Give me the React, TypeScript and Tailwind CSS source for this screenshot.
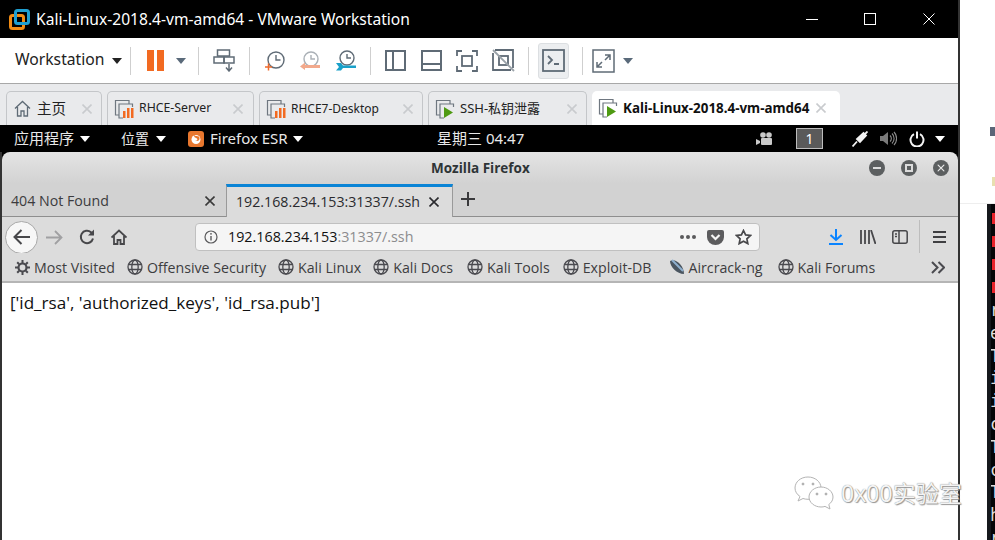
import type { ReactNode } from "react";

const ui = "font-['Noto_Sans','Noto_Sans_CJK_SC',sans-serif]";

function Caret({ className = "" }: { className?: string }) {
  return (
    <svg width="10" height="6" viewBox="0 0 10 6" className={className}>
      <path d="M0 0h10L5 6z" fill="currentColor" />
    </svg>
  );
}

function Sep({ className = "" }: { className?: string }) {
  return <div className={`h-[28px] w-px bg-[#cfcfcf] ${className}`} />;
}

function Globe() {
  return (
    <svg width="16" height="16" viewBox="0 0 16 16" fill="none" stroke="#4a4a4f" strokeWidth="1.3" className="flex-none">
      <circle cx="8" cy="8" r="7" />
      <ellipse cx="8" cy="8" rx="3.2" ry="7" />
      <path d="M1.5 5.5h13M1.5 10.5h13" />
    </svg>
  );
}

function VmIcon({ running }: { running?: boolean }) {
  return (
    <svg width="20" height="20" viewBox="0 0 20 20" fill="none" className="flex-none">
      <path d="M5 16H1.5V1.5H15V5" stroke="#6f7780" strokeWidth="1.2" />
      <path d="M9 19H5V5h13.500V8" stroke="#6f7780" strokeWidth="1.2" />
      {running ? (
        <path d="M9 8l9 5.500-9 5.500z" fill="#4e9a12" />
      ) : (
        <>
          <rect x="9" y="12" width="2.500" height="7" fill="#f26a21" />
          <rect x="13" y="9" width="2.500" height="10" fill="#f26a21" />
          <rect x="17" y="9" width="2.500" height="10" fill="#f26a21" />
        </>
      )}
    </svg>
  );
}

function CloseX({ className = "" }: { className?: string }) {
  return (
    <svg width="10" height="10" viewBox="0 0 10 10" className={className}>
      <path d="M0.500 0.500l9 9M9.500 0.500l-9 9" stroke="currentColor" strokeWidth="1.600" />
    </svg>
  );
}

function VmTab({ width, children, textClass, closeClass, icon }: { width: string; children: ReactNode; textClass: string; closeClass: string; icon: ReactNode }) {
  return (
    <div className={`flex h-[34px] flex-none items-center rounded-t-[5px] border border-b-0 border-[#c4c6c9] pl-[6px] ${width}`}>
      {icon}
      <span className={`whitespace-nowrap text-[#222] ${textClass}`}>{children}</span>
      <CloseX className={`ml-auto text-[#c9cbce] ${closeClass}`} />
    </div>
  );
}

function Bookmark({ icon, label, className = "" }: { icon?: ReactNode; label: string; className?: string }) {
  return (
    <div className={`flex flex-none items-center gap-[4px] ${className}`}>
      {icon ?? <Globe />}
      <span className="whitespace-nowrap text-[14.200px] text-[#3d3d3f]">{label}</span>
    </div>
  );
}

function TitleBar() {
  return (
    <div className="flex h-[38px] flex-none items-center bg-black pl-[9px]">
      <svg width="21" height="21" viewBox="0 0 21 21" fill="none" className="flex-none">
        <rect x="1.500" y="6.500" width="13" height="13" rx="2" stroke="#f28c13" strokeWidth="3" />
        <rect x="6.500" y="1.500" width="13" height="13" rx="2" stroke="#1f9fd0" strokeWidth="3" />
      </svg>
      <span className={`ml-[6px] w-[375px] whitespace-nowrap pt-px text-[15.600px] text-white ${ui}`}>Kali-Linux-2018.4-vm-amd64 - VMware Workstation</span>
      <div className="ml-[395px] h-px w-[12px] bg-white" />
      <div className="ml-[46px] h-[12px] w-[12px] border border-white" />
      <svg width="12" height="12" viewBox="0 0 12 12" className="ml-[47px]">
        <path d="M0.500 0.500l11 11M11.500 0.500l-11 11" stroke="#fff" strokeWidth="1" />
      </svg>
    </div>
  );
}

function Toolbar() {
  const g = "#5f6b76";
  return (
    <div className="flex h-[45px] flex-none items-center bg-white pl-[15px]">
      <span className={`w-[89px] whitespace-nowrap pb-[2px] text-[15.700px] text-[#222] ${ui}`}>Workstation</span>
      <Caret className="ml-[8px] text-[#222]" />
      <Sep className="ml-[8px]" />
      <div className="ml-[16px] flex gap-[3px]">
        <div className="h-[21px] w-[7px] bg-[#f26a21]" />
        <div className="h-[21px] w-[7px] bg-[#f26a21]" />
      </div>
      <Caret className="ml-[12px] text-[#5a6a7a]" />
      <Sep className="ml-[12px]" />
      <svg width="22" height="23" viewBox="0 0 22 23" fill="none" stroke={g} strokeWidth="1.500" className="ml-[14px]">
        <rect x="4.500" y="1" width="12" height="6" />
        <rect x="1" y="8" width="10" height="6" />
        <rect x="11" y="8" width="10" height="6" />
        <path d="M16 15v6M13 18.500l3 3.500 3-3.500" />
      </svg>
      <Sep className="ml-[14px]" />
      <svg width="20" height="20" viewBox="0 0 20 20" fill="none" className="ml-[15px]">
        <circle cx="11" cy="9" r="8" stroke={g} strokeWidth="1.400" />
        <path d="M11 4v5h4.500" stroke={g} strokeWidth="1.400" />
        <path d="M0 16h7M3.500 12.500v7" stroke="#ee6a2c" strokeWidth="1.500" />
      </svg>
      <svg width="21" height="20" viewBox="0 0 21 20" fill="none" className="ml-[15px]">
        <circle cx="11" cy="8" r="7" stroke="#aab0b6" strokeWidth="1.400" />
        <path d="M11 4v4h4" stroke="#aab0b6" strokeWidth="1.400" />
        <path d="M0 15.500l5-4v2.500h15v3H5V19z" fill="#f2a98c" />
      </svg>
      <svg width="21" height="21" viewBox="0 0 21 21" fill="none" className="ml-[15px]">
        <circle cx="11" cy="8" r="7" stroke={g} strokeWidth="1.400" />
        <path d="M11 4v4h4" stroke={g} strokeWidth="1.400" />
        <path d="M0 13h5l2 2.500h13v2.500H7l-2 2.500H0l3-3.500z" fill="#19a0c9" />
      </svg>
      <Sep className="ml-[13px]" />
      <svg width="21" height="21" viewBox="0 0 21 21" fill="none" stroke={g} strokeWidth="2" className="ml-[14px]">
        <rect x="1" y="1" width="19" height="19" />
        <path d="M8 1v19" />
      </svg>
      <svg width="21" height="21" viewBox="0 0 21 21" fill="none" stroke={g} strokeWidth="2" className="ml-[15px]">
        <rect x="1" y="1" width="19" height="19" />
        <path d="M1 14h19" />
      </svg>
      <svg width="22" height="22" viewBox="0 0 22 22" fill="none" stroke={g} strokeWidth="1.800" className="ml-[14px]">
        <rect x="6" y="6" width="10" height="10" />
        <path d="M1 6V1h5M16 1h5v5M21 16v5h-5M6 21H1v-5" />
      </svg>
      <svg width="23" height="23" viewBox="0 0 23 23" fill="none" stroke={g} strokeWidth="1.800" className="ml-[14px]">
        <path d="M3 1h18v18M19 21H1V4" />
        <rect x="7" y="7" width="9" height="9" />
        <path d="M1 1l21 21" stroke="#9aa2a9" />
      </svg>
      <Sep className="ml-[13px]" />
      <div className="ml-[9px] flex h-[36px] w-[31px] flex-none items-center justify-center rounded-[3px] border border-[#dcdfe2] bg-[#eceef0]">
        <svg width="23" height="23" viewBox="0 0 23 23" fill="none" stroke="#5f6b76" strokeWidth="1.800">
          <rect x="1" y="1" width="21" height="21" />
          <path d="M6 7l4 4-4 4M12 15h5" />
        </svg>
      </div>
      <Sep className="ml-[13px]" />
      <svg width="23" height="24" viewBox="0 0 23 24" fill="none" stroke={g} strokeWidth="1.500" className="ml-[9px]">
        <rect x="1" y="1" width="21" height="22" />
        <path d="M13 6h5v5M18 6l-5 5M10 18H5v-5M5 18l5-5" />
      </svg>
      <Caret className="ml-[8px] text-[#5a6a7a]" />
    </div>
  );
}

function VmTabs() {
  return (
    <div className={`flex h-[42px] flex-none items-end gap-[5px] border-t border-[#a8a8a8] bg-[#e9eaec] pl-[6px] ${ui}`}>
      <div className="flex h-[34px] w-[96px] flex-none items-center rounded-t-[5px] border border-b-0 border-[#c4c6c9] pl-[7px]">
        <svg width="17" height="17" viewBox="0 0 17 17" fill="none" stroke="#5f6b76" strokeWidth="1.300" className="flex-none">
          <path d="M1 8.500L8.500 1.500 16 8.500M3.500 7v9h3.500v-5h3v5h3.500V7" />
        </svg>
        <span className="ml-[6px] text-[14.500px] text-[#222]">主页</span>
        <CloseX className="ml-auto mr-[9px] text-[#c9cbce]" />
      </div>
      <VmTab width="w-[147px]" icon={<VmIcon />} textClass="ml-[5px] text-[12.300px]" closeClass="mr-[10px]">RHCE-Server</VmTab>
      <VmTab width="w-[164px]" icon={<VmIcon />} textClass="ml-[5px] text-[12px]" closeClass="mr-[9px]">RHCE7-Desktop</VmTab>
      <VmTab width="w-[159px]" icon={<VmIcon running />} textClass="ml-[5px] text-[13px]" closeClass="mr-[9px]">SSH-私钥泄露</VmTab>
      <div className="flex h-[34px] w-[248px] flex-none items-center rounded-t-[5px] bg-white pl-[6px]">
        <VmIcon running />
        <span className="ml-[5px] whitespace-nowrap text-[13.400px] font-bold text-[#111]">Kali-Linux-2018.4-vm-amd64</span>
        <CloseX className="ml-auto mr-[14px] text-[#c9cbce]" />
      </div>
    </div>
  );
}

function GnomeBar() {
  return (
    <div className={`relative flex h-[27px] flex-none items-center bg-black pl-[14px] text-[15px] text-[#e8e8e8] ${ui}`}>
      <span className="w-[60px] whitespace-nowrap">应用程序</span>
      <Caret className="ml-[6px] text-white" />
      <span className="ml-[31px] w-[28px] whitespace-nowrap text-[14px]">位置</span>
      <Caret className="ml-[7px] text-white" />
      <svg width="16" height="16" viewBox="0 0 16 16" className="ml-[22px] flex-none">
        <rect width="16" height="16" rx="3" fill="#e8772e" />
        <circle cx="8" cy="8.500" r="4.500" fill="#fff" />
        <path d="M6 4c2 2 5 0 5.500 3S9 10.500 7 9.500c2 .5 3-1 2-2S6 7 6 4z" fill="#e8772e" />
      </svg>
      <span className="ml-[6px] w-[78px] whitespace-nowrap">Firefox ESR</span>
      <Caret className="ml-[5px] text-white" />
      <span className="ml-[134px] w-[89px] whitespace-nowrap">星期三 04:47</span>
      <svg width="16" height="13" viewBox="0 0 16 13" className="ml-[230px] flex-none" fill="#c9c9c9">
        <circle cx="7" cy="3" r="2.800" />
        <circle cx="13" cy="3" r="2.800" />
        <rect x="5" y="6" width="11" height="7" rx="1" />
        <path d="M0 7l4 2v2l-4 2z" />
      </svg>
      <div className="ml-[24px] flex h-[21px] w-[27px] flex-none items-center justify-center border border-[#bdbdbd] bg-[#5a5a5a] text-[14px] text-white">1</div>
      <svg width="16" height="16" viewBox="0 0 16 16" className="ml-[29px] flex-none">
        <path d="M0.500 15.500L5 10.500M5 8l3 3 6-6.500-2.500-2.500zM12.500 3.500L15.500 0.500" stroke="#f2f2f2" strokeWidth="1.800" fill="#f2f2f2" />
      </svg>
      <svg width="17" height="15" viewBox="0 0 17 15" fill="none" className="ml-[12px] flex-none">
        <path d="M0 5h3l5-4v13l-5-4H0z" fill="#7a7a7a" />
        <path d="M10 4.500a4 4 0 010 6M12 2.500a7 7 0 010 10M14 1a9.500 9.500 0 010 13" stroke="#8c8c8c" strokeWidth="1.100" />
      </svg>
      <svg width="16" height="16" viewBox="0 0 16 16" fill="none" stroke="#f4f4f4" strokeWidth="2" className="ml-[12px] flex-none">
        <path d="M5 3.200a6.500 6.500 0 106 0M8 0.500v7" />
      </svg>
      <Caret className="ml-[10px] text-white" />
    </div>
  );
}

function FirefoxTitle() {
  const btn = "flex h-[16px] w-[16px] flex-none items-center justify-center rounded-full bg-[#5c5f60]";
  return (
    <div className="relative flex h-[32px] flex-none items-center justify-end gap-[16px] rounded-t-[8px] bg-gradient-to-b from-[#e4e4e4] to-[#d2d2d2] pr-[9px]">
      <span className="absolute left-[429px] top-[6px] whitespace-nowrap text-[13.500px] font-bold text-[#2e3436]">Mozilla Firefox</span>
      <div className={btn}>
        <div className="h-[2px] w-[8px] bg-[#dcdcdc]" />
      </div>
      <div className={btn}>
        <div className="h-[8px] w-[8px] border-2 border-[#dcdcdc]" />
      </div>
      <div className={btn}>
        <CloseX className="scale-75 text-[#e8e8e8]" />
      </div>
    </div>
  );
}

function FirefoxTabs() {
  return (
    <div className="flex h-[33px] flex-none items-stretch border-b border-[#8e8e8e] bg-[#d2d2d2]">
      <div className="flex w-[224px] flex-none items-center pl-[9px] pr-[11px] pt-[1px]">
        <span className="whitespace-nowrap text-[14.200px] text-[#3c3c3e]">404 Not Found</span>
        <CloseX className="ml-auto text-[#3a3a3a]" />
      </div>
      <div className="-mb-px flex w-[227px] flex-none items-center border-x border-t-[3px] border-x-[#9a9a9a] border-t-[#0a84d6] bg-[#dcdcdc] pl-[9px] pr-[13px]">
        <span className="whitespace-nowrap text-[14.200px] text-[#2a2a2e]">192.168.234.153:31337/.ssh</span>
        <CloseX className="ml-auto text-[#2a2a2e]" />
      </div>
      <svg width="14" height="14" viewBox="0 0 14 14" stroke="#3a3a3c" strokeWidth="2" className="ml-[8px] mt-[8px]">
        <path d="M7 0v14M0 7h14" />
      </svg>
    </div>
  );
}

function NavBar() {
  const d = "#47474a";
  return (
    <div className="flex h-[36px] flex-none items-center bg-[#dcdcdc] pl-[3px] pt-[4px]">
      <div className="flex h-[33px] w-[33px] flex-none items-center justify-center rounded-full border border-[#a8a8a8] bg-[#f7f7f7]">
        <svg width="18" height="16" viewBox="0 0 18 16" fill="none" stroke={d} strokeWidth="2">
          <path d="M17 8H2M8.500 1L1.500 8l7 7" />
        </svg>
      </div>
      <svg width="17" height="15" viewBox="0 0 17 15" fill="none" stroke="#a0a0a2" strokeWidth="1.800" className="ml-[8px] flex-none">
        <path d="M0 7.500h15M9 1l6.500 6.500L9 14" />
      </svg>
      <svg width="16" height="16" viewBox="0 0 16 16" fill="none" stroke={d} strokeWidth="2" className="ml-[16px] flex-none">
        <path d="M14 9.500A6.200 6.200 0 1112 3.200L14.500 5.500" />
        <path d="M15 0.500v6H9" fill={d} stroke="none" />
      </svg>
      <svg width="16" height="16" viewBox="0 0 16 16" fill="none" stroke={d} strokeWidth="1.800" className="ml-[16px] flex-none">
        <path d="M0.500 8.500L8 1.500l7.500 7M3 7v8h3.500v-4h3v4H13V7" />
      </svg>
      <div className="ml-[68px] flex h-[28px] w-[565px] flex-none items-center rounded-[4px] border border-[#c0c0c0] bg-[#f5f5f5] pl-[8px] pr-[7px]">
        <svg width="14" height="14" viewBox="0 0 14 14" fill="none" className="flex-none">
          <circle cx="7" cy="7" r="6" stroke="#5a5a5c" strokeWidth="1.200" />
          <path d="M7 6v4.500" stroke="#5a5a5c" strokeWidth="1.400" />
          <circle cx="7" cy="3.800" r="0.900" fill="#5a5a5c" />
        </svg>
        <span className="ml-[10px] whitespace-nowrap text-[14.300px] text-[#111]">
          192.168.234.153<span className="text-[#8c8c8e]">:31337/.ssh</span>
        </span>
        <div className="ml-auto flex gap-[2px]">
          <div className="h-[4px] w-[4px] rounded-full bg-[#5a5a5c]" />
          <div className="h-[4px] w-[4px] rounded-full bg-[#5a5a5c]" />
          <div className="h-[4px] w-[4px] rounded-full bg-[#5a5a5c]" />
        </div>
        <svg width="17" height="15" viewBox="0 0 17 15" className="ml-[11px] flex-none">
          <path d="M2 0h13a2 2 0 012 2v5a8.500 8 0 01-17 0V2a2 2 0 012-2z" fill="#5c5c5e" />
          <path d="M4.500 5l4 4 4-4" stroke="#f5f5f5" strokeWidth="2.200" fill="none" />
        </svg>
        <svg width="17" height="16" viewBox="0 0 17 16" fill="none" stroke={d} strokeWidth="1.700" className="ml-[11px] flex-none">
          <path d="M8.500 1.500l2.100 4.400 4.900.6-3.600 3.300.9 4.800-4.300-2.400-4.300 2.400.9-4.800L1.500 6.500l4.900-.6z" />
        </svg>
      </div>
      <svg width="14" height="16" viewBox="0 0 14 16" fill="none" stroke="#0a84ff" strokeWidth="2" className="ml-[69px] flex-none">
        <path d="M7 0v10.500M1.500 6L7 11l5.500-5M0 15h14" />
      </svg>
      <svg width="16" height="14" viewBox="0 0 16 14" fill="none" stroke={d} strokeWidth="1.800" className="ml-[17px] flex-none">
        <path d="M1 0v14M5 0v14M9 0v14M11 0l4.500 14" />
      </svg>
      <svg width="16" height="14" viewBox="0 0 16 14" fill="none" stroke={d} strokeWidth="1.500" className="ml-[16px] flex-none">
        <rect x="0.800" y="0.800" width="14.400" height="12.400" rx="2" />
        <path d="M7 1v12M3 4h2M3 6.500h2" />
      </svg>
      <div className="ml-[11px] h-[34px] w-px bg-[#bdbdbd]" />
      <div className="ml-[13px] flex flex-col gap-[3px]">
        <div className="h-[2px] w-[13px] bg-[#3f3f42]" />
        <div className="h-[2px] w-[13px] bg-[#3f3f42]" />
        <div className="h-[2px] w-[13px] bg-[#3f3f42]" />
      </div>
    </div>
  );
}

function BookmarksBar() {
  return (
    <div className="flex h-[30px] flex-none items-center gap-[12px] border-b-2 border-[#b5b5b5] bg-[#dcdcdc] pl-[13px] pr-[13px] pt-px">
      <Bookmark
        label="Most Visited"
        icon={
          <svg width="15" height="15" viewBox="0 0 15 15" className="flex-none">
            <circle cx="7.500" cy="7.500" r="4" fill="none" stroke="#4a4a4f" strokeWidth="2.200" />
            <path d="M7.500 0v3M7.500 12v3M0 7.500h3M12 7.500h3M2.200 2.200l2 2M10.800 10.800l2 2M12.800 2.200l-2 2M4.200 10.800l-2 2" stroke="#4a4a4f" strokeWidth="2" />
          </svg>
        }
      />
      <Bookmark label="Offensive Security" />
      <Bookmark label="Kali Linux" />
      <Bookmark label="Kali Docs" />
      <Bookmark label="Kali Tools" className="ml-[2px]" />
      <Bookmark label="Exploit-DB" className="ml-[1px]" />
      <Bookmark
        label="Aircrack-ng"
        className="ml-[5px]"
        icon={
          <svg width="16" height="16" viewBox="0 0 16 16" className="flex-none">
            <path d="M1 2c6-3 14 5 14 13C8 15 1 8 1 2z" fill="#4a5560" />
            <path d="M3 1l11 11" stroke="#8fb0cf" strokeWidth="2" />
          </svg>
        }
      />
      <Bookmark label="Kali Forums" className="ml-[3px]" />
      <svg width="14" height="13" viewBox="0 0 14 13" fill="none" stroke="#4a4a4f" strokeWidth="2" className="ml-auto flex-none">
        <path d="M1 1l5.500 5.500L1 12M7.500 1L13 6.500 7.500 12" />
      </svg>
    </div>
  );
}

function Terminal() {
  const lines = ["r", "e", "T", "i", "i", "c", "T", "c", "T", "h", "r"];
  return (
    <div className="ml-[27px] flex min-h-0 flex-1 flex-col overflow-hidden border-l-4 border-[#16181c] bg-[#050608] pt-[9px]">
      {[0, 1, 2, 3].map((i) => (
        <div key={i} className="mb-[12px] ml-px h-[11px] w-[4px] flex-none bg-[#e8222a]" />
      ))}
      <div className="-ml-px -mt-[6px] font-['DejaVu_Sans_Mono',monospace] text-[17px] leading-[22.800px] text-[#dedede]">
        {lines.map((c, i) => (
          <div key={i} className="h-[22.800px]">
            {c}
          </div>
        ))}
      </div>
    </div>
  );
}

export default function App() {
  return (
    <div className="relative flex h-[540px] w-[995px] overflow-hidden bg-white">
      <div className="flex w-[960px] flex-none flex-col border-r-2 border-[#333333]">
        <TitleBar />
        <Toolbar />
        <VmTabs />
        <GnomeBar />
        <div className="flex min-h-0 flex-1 flex-col border-l-2 border-[#333333] bg-black font-['Open_Sans',sans-serif]">
          <FirefoxTitle />
          <FirefoxTabs />
          <NavBar />
          <BookmarksBar />
          <div className="flex-1 bg-white pl-[8px] pt-[7px] text-[17.100px] text-[#111]">
            ['id_rsa', 'authorized_keys', 'id_rsa.pub']
          </div>
        </div>
      </div>
      <div className="flex min-w-0 flex-1 flex-col">
        <div className="h-[204px] flex-none border-b border-[#eeeeee] pt-[127px]">
          <div className="ml-[30px] h-[9px] w-[5px] bg-[#5c6678]" />
          <div className="ml-[32px] mt-[41px] h-[9px] w-[3px] bg-[#e8dfb0]" />
        </div>
        <Terminal />
      </div>
      {/* watermark */}
      <div className="absolute left-[794px] top-[476px] flex items-center gap-[7px]">
        <svg width="40" height="34" viewBox="0 0 40 34" fill="#fff" stroke="#b4b4b4" strokeWidth="1">
          <path d="M14 1C6.500 1 1 6 1 12c0 3.500 2 6.500 5 8.500L4 25l5-2.500c1.500.5 3 .8 5 .8 7 0 13-5 13-11.300S21 1 14 1z" />
          <path d="M27 11c-6.500 0-12 4.500-12 10s5.500 10 12 10c1.500 0 2.800-.2 4-.6L36 33l-1.200-4.500C37.500 26.500 39 24 39 21c0-5.500-5.500-10-12-10z" />
          <circle cx="9" cy="8" r="1" fill="#999" />
          <circle cx="19" cy="8" r="1" fill="#999" />
          <circle cx="23" cy="18" r="1" fill="#999" />
          <circle cx="32" cy="18" r="1" fill="#999" />
        </svg>
        <span className={`whitespace-nowrap text-[23px] text-[#f4f4f4] [text-shadow:0_0_1px_#777,1px_1px_1px_#999] ${ui}`}>0x00实验室</span>
      </div>
    </div>
  );
}
